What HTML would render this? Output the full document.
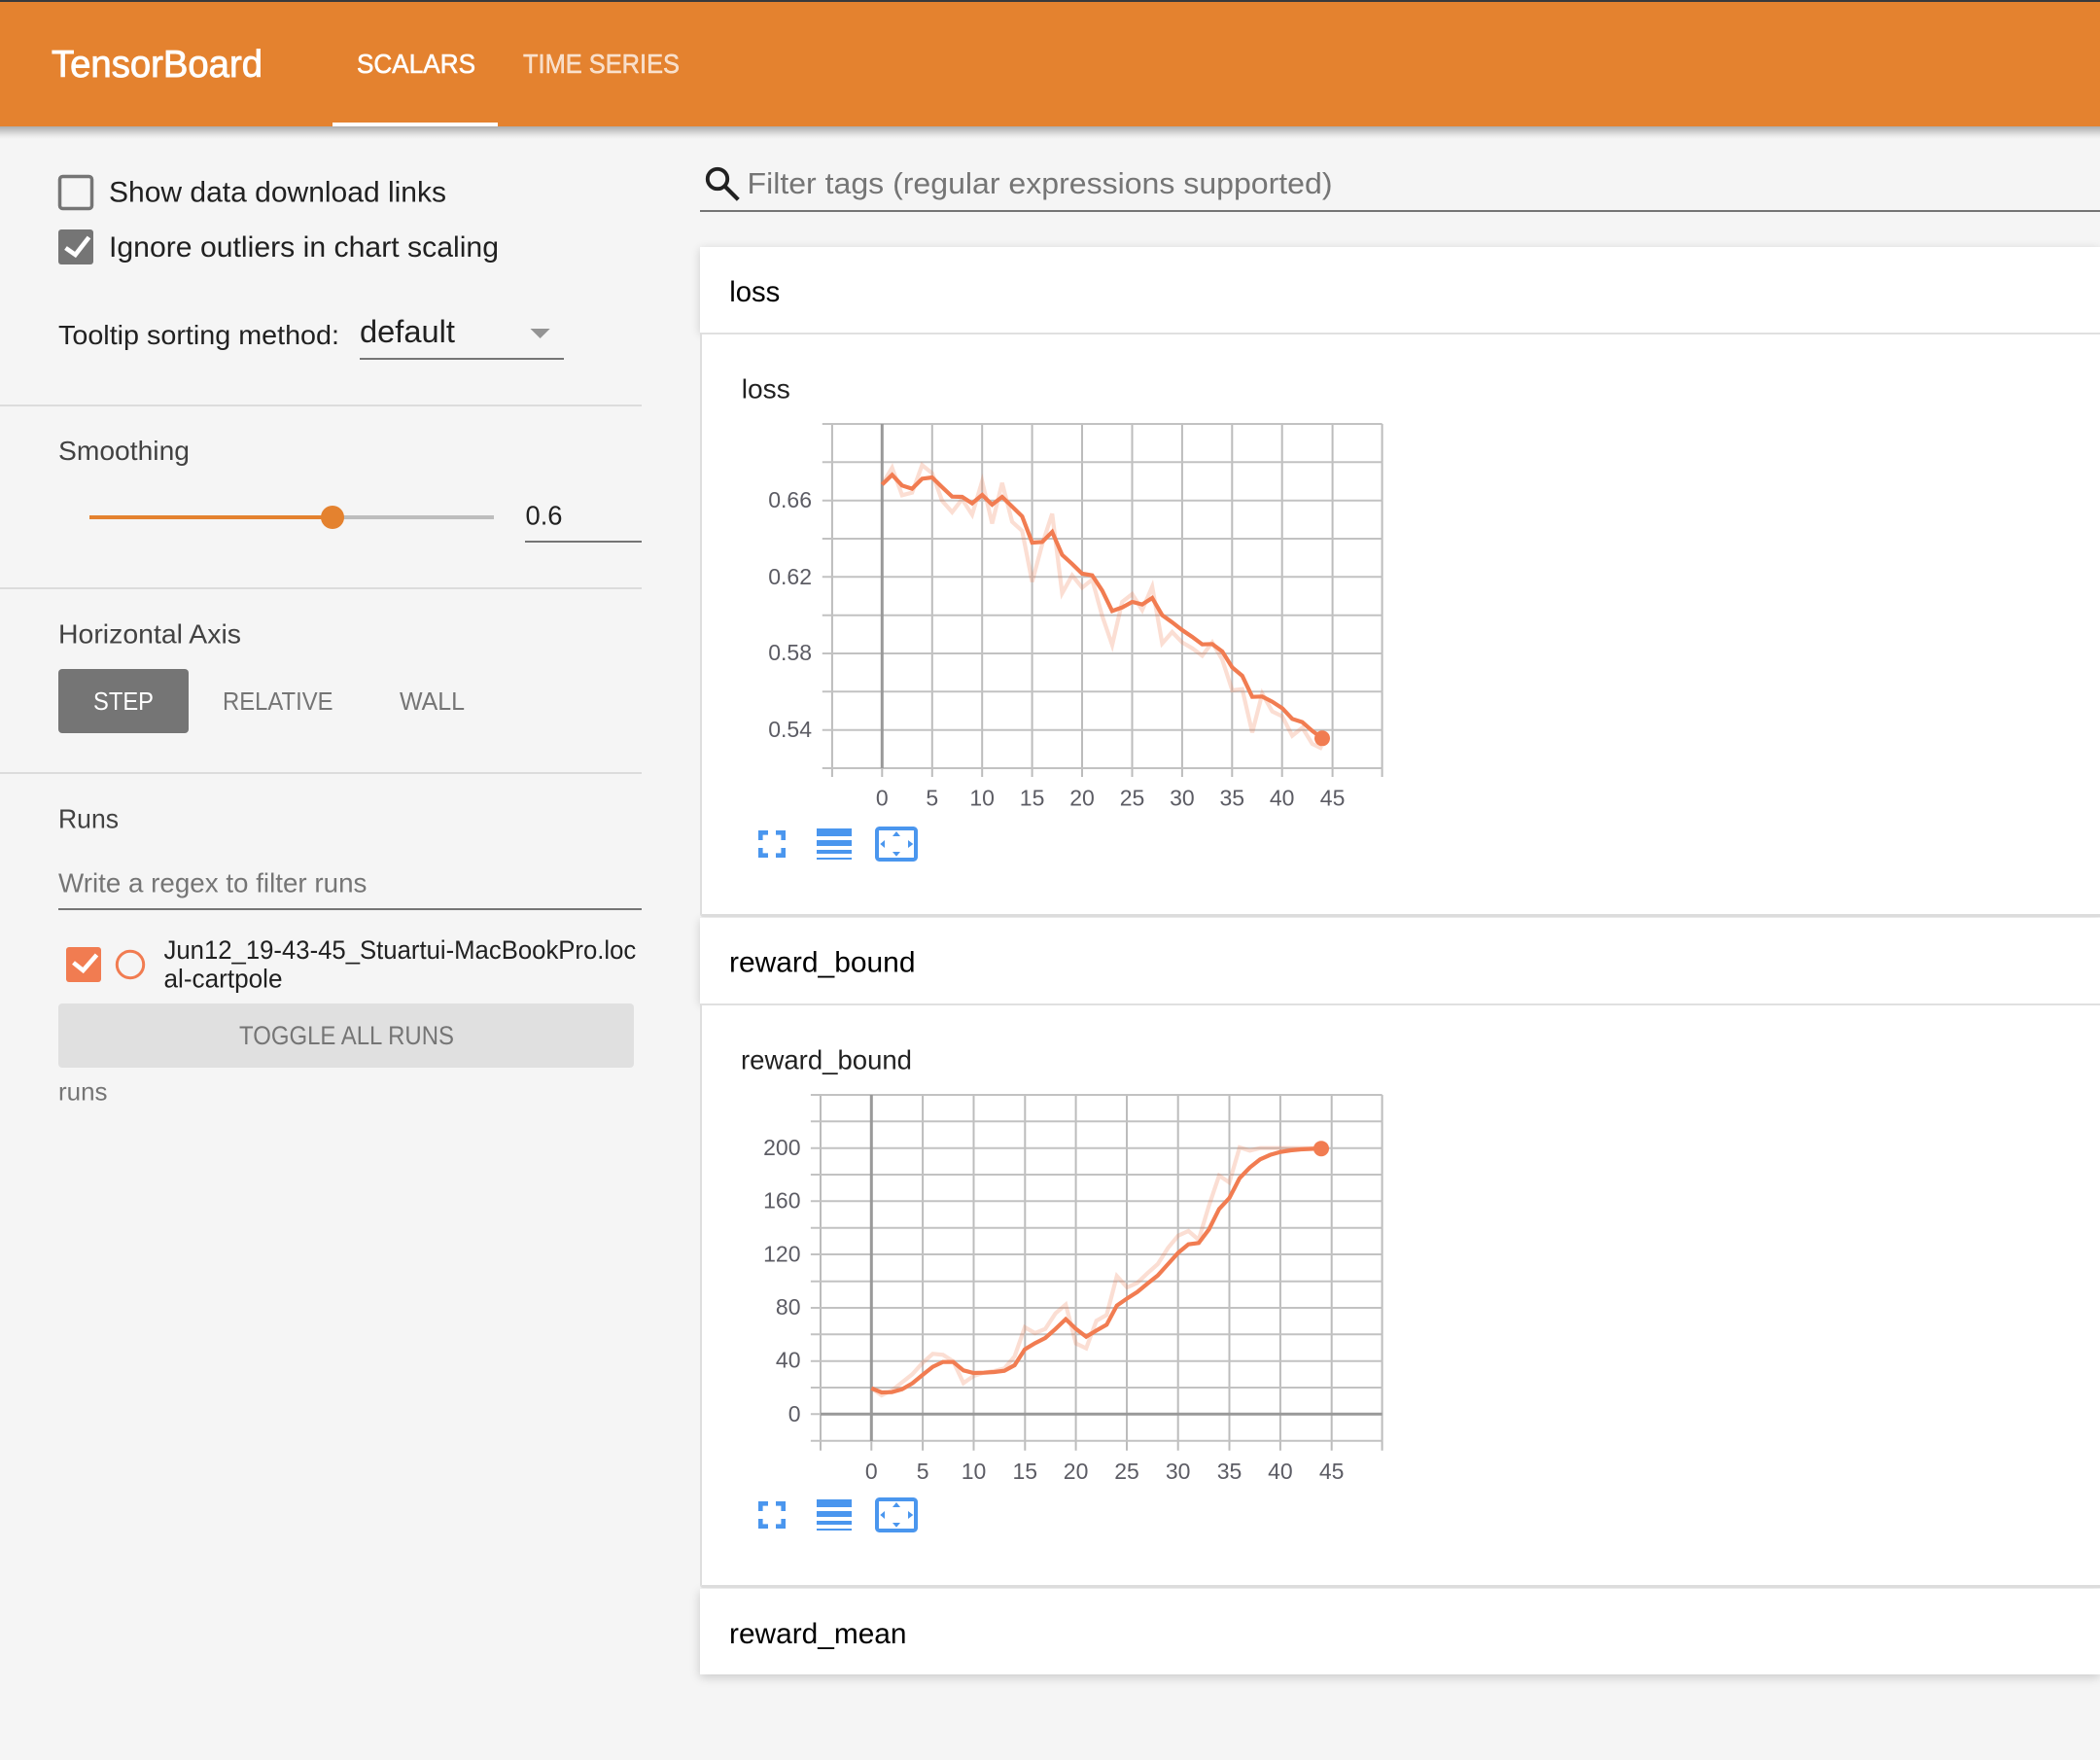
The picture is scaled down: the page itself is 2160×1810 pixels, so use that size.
<!DOCTYPE html>
<html lang="en">
<head>
<meta charset="utf-8">
<title>TensorBoard</title>
<style>
html,body{margin:0;padding:0;background:#f5f5f5;width:2160px;height:1810px;overflow:hidden}
.a{position:absolute;box-sizing:border-box}
svg{position:absolute;left:0;top:0}
text{font-family:"Liberation Sans",Arial,sans-serif;white-space:pre}
</style>
</head>
<body>
<div class="a" style="left:0;top:130px;width:2160px;height:13px;background:linear-gradient(#adadad,#c6c6c6 4px,#e6e6e6 9px,#f5f5f5)"></div>
<div class="a" style="left:0;top:0;width:2160px;height:130px;background:#e4822f;border-top:2px solid #37393d"></div>
<div class="a" style="left:720px;top:254px;width:1440px;height:88px;background:#fff;box-shadow:0 2px 9px rgba(0,0,0,.16)"></div>
<div class="a" style="left:720px;top:944px;width:1440px;height:88px;background:#fff;box-shadow:0 2px 9px rgba(0,0,0,.16)"></div>
<div class="a" style="left:720px;top:1634px;width:1440px;height:88px;background:#fff;box-shadow:0 3px 10px rgba(0,0,0,.18)"></div>
<div class="a" style="left:720px;top:342px;width:1440px;height:601px;background:#fff;border-left:2.5px solid #dedede;border-top:2px solid #e0e0e0;border-bottom:3px solid #dcdcdc;border-radius:0 0 0 3px"></div>
<div class="a" style="left:720px;top:944px;width:1440px;height:88px;background:#fff"></div>
<div class="a" style="left:720px;top:1032px;width:1440px;height:601px;background:#fff;border-left:2.5px solid #dedede;border-top:2px solid #e0e0e0;border-bottom:3px solid #dcdcdc;border-radius:0 0 0 3px"></div>
<div class="a" style="left:720px;top:1634px;width:1440px;height:88px;background:#fff"></div>

<svg width="2160" height="1810" viewBox="0 0 2160 1810" xmlns="http://www.w3.org/2000/svg">
<!-- header -->
<rect x="342" y="126" width="170" height="4" fill="#fff"/>
<text x="53" y="79" font-size="39" fill="#fff" stroke="#fff" stroke-width=".9" textLength="217" lengthAdjust="spacingAndGlyphs">TensorBoard</text>
<text x="367" y="75" font-size="28" fill="#fff" stroke="#fff" stroke-width=".6" textLength="122" lengthAdjust="spacingAndGlyphs">SCALARS</text>
<text x="538" y="75" font-size="28" fill="#fff" fill-opacity=".72" stroke="#fff" stroke-opacity=".72" stroke-width=".5" textLength="161" lengthAdjust="spacingAndGlyphs">TIME SERIES</text>

<!-- sidebar -->
<rect x="61.5" y="181.5" width="33" height="33" rx="3" fill="none" stroke="#757575" stroke-width="3.5"/>
<text x="112" y="207.7" font-size="30" fill="#212121" textLength="347" lengthAdjust="spacingAndGlyphs">Show data download links</text>
<rect x="60" y="236" width="36" height="36" rx="3" fill="#757575"/>
<path d="M67.5 255l10 7 14-18" fill="none" stroke="#fff" stroke-width="4.6"/>
<text x="112" y="264" font-size="30" fill="#212121" textLength="401" lengthAdjust="spacingAndGlyphs">Ignore outliers in chart scaling</text>
<text x="60" y="354" font-size="28" fill="#212121" textLength="289" lengthAdjust="spacingAndGlyphs">Tooltip sorting method:</text>
<text x="370" y="352.2" font-size="32" fill="#212121" textLength="98" lengthAdjust="spacingAndGlyphs">default</text>
<polygon points="545.5,338 565.7,338 555.6,348" fill="#949494"/>
<rect x="370" y="368" width="210" height="2" fill="#757575"/>
<rect x="0" y="416" width="660" height="2" fill="#dcdcdc"/>

<text x="60" y="473" font-size="28" fill="#424242" textLength="135" lengthAdjust="spacingAndGlyphs">Smoothing</text>
<rect x="342" y="530" width="166" height="4" fill="#bdbdbd"/>
<rect x="92" y="530" width="250" height="4" fill="#e4822f"/>
<circle cx="342" cy="532" r="12" fill="#e4822f"/>
<text x="540.5" y="539.5" font-size="28" fill="#212121" textLength="38" lengthAdjust="spacingAndGlyphs">0.6</text>
<rect x="540" y="556" width="120" height="2" fill="#757575"/>
<rect x="0" y="604" width="660" height="2" fill="#dcdcdc"/>

<text x="60" y="661.7" font-size="28" fill="#424242" textLength="188" lengthAdjust="spacingAndGlyphs">Horizontal Axis</text>
<rect x="60" y="688" width="134" height="66" rx="4" fill="#757575"/>
<text x="96" y="730" font-size="26" fill="#fff" textLength="62" lengthAdjust="spacingAndGlyphs">STEP</text>
<text x="229" y="730" font-size="26" fill="#757575" textLength="113.5" lengthAdjust="spacingAndGlyphs">RELATIVE</text>
<text x="411" y="730" font-size="26" fill="#757575" textLength="67" lengthAdjust="spacingAndGlyphs">WALL</text>
<rect x="0" y="794" width="660" height="2" fill="#dcdcdc"/>

<text x="60" y="851.7" font-size="28" fill="#424242" textLength="62" lengthAdjust="spacingAndGlyphs">Runs</text>
<text x="60" y="917.5" font-size="28" fill="#757575" textLength="317.4" lengthAdjust="spacingAndGlyphs">Write a regex to filter runs</text>
<rect x="60" y="934" width="600" height="2" fill="#757575"/>
<rect x="68" y="974" width="36" height="36" rx="3" fill="#f17c51"/>
<path d="M75.5 990l10 8 14-16" fill="none" stroke="#fff" stroke-width="4.6"/>
<circle cx="134" cy="992" r="13.7" fill="none" stroke="#f17c51" stroke-width="3"/>
<text x="168.5" y="986" font-size="27" fill="#212121" textLength="485.8" lengthAdjust="spacingAndGlyphs">Jun12_19-43-45_Stuartui-MacBookPro.loc</text>
<text x="168.5" y="1015.7" font-size="27" fill="#212121" textLength="122" lengthAdjust="spacingAndGlyphs">al-cartpole</text>
<rect x="60" y="1032" width="592" height="66" rx="4" fill="#e0e0e0"/>
<text x="246" y="1074" font-size="27" fill="#757575" textLength="221" lengthAdjust="spacingAndGlyphs">TOGGLE ALL RUNS</text>
<text x="60" y="1131.7" font-size="26" fill="#757575" textLength="50.5" lengthAdjust="spacingAndGlyphs">runs</text>

<!-- filter -->
<circle cx="738" cy="184" r="10.2" fill="none" stroke="#212121" stroke-width="3.9"/>
<path d="M746 192l13.3 13.3" fill="none" stroke="#212121" stroke-width="4.2"/>
<text x="768.5" y="199" font-size="31" fill="#757575" textLength="602" lengthAdjust="spacingAndGlyphs">Filter tags (regular expressions supported)</text>
<rect x="720" y="216" width="1440" height="2" fill="#757575"/>

<!-- section titles -->
<text x="750.2" y="310" font-size="30" fill="#000" textLength="52.1" lengthAdjust="spacingAndGlyphs">loss</text>
<text x="762.8" y="409.3" font-size="28" fill="#212121" textLength="50" lengthAdjust="spacingAndGlyphs">loss</text>
<text x="750" y="999.7" font-size="30" fill="#000" textLength="191.5" lengthAdjust="spacingAndGlyphs">reward_bound</text>
<text x="762" y="1099.3" font-size="28" fill="#212121" textLength="176" lengthAdjust="spacingAndGlyphs">reward_bound</text>
<text x="750" y="1690" font-size="30" fill="#000" textLength="182.5" lengthAdjust="spacingAndGlyphs">reward_mean</text>

<!-- chart 1 -->
<path d="M855.9 436V799M958.8 436V799M1010.2 436V799M1061.6 436V799M1113 436V799M1164.5 436V799M1215.9 436V799M1267.3 436V799M1318.7 436V799M1370.6 436V799M1421.6 436V799M907.3 790V799" fill="none" stroke="#bcbcbc" stroke-width="2"/>
<path d="M845.8 436H1421.6M845.8 475.3H1421.6M845.8 514.7H1421.6M845.8 554H1421.6M845.8 593.3H1421.6M845.8 632.7H1421.6M845.8 672H1421.6M845.8 711.3H1421.6M845.8 750.7H1421.6M845.8 790H1421.6" fill="none" stroke="#c2c2c2" stroke-width="2"/>
<path d="M907.3 436V790" fill="none" stroke="#999" stroke-width="3"/>
<g transform="translate(907.3,420) scale(10.29,.33333)" fill="none" stroke="#f17c51" stroke-linejoin="miter">
<polyline vector-effect="non-scaling-stroke" stroke-opacity=".25" stroke-width="4.2" points="0,235 1,183 2,268 3,260 4,175 5,200 6,285 7,320 8,280 9,328 10,225 11,355 12,230 13,350 14,378 15,535 16,420 17,325 18,570 19,515 20,553 21,528 22,640 23,730 24,597 25,573 26,622 27,550 28,725 29,690 30,722 31,740 32,763 33,722 34,775 35,870 36,866 37,1000 38,880 39,935 40,950 41,1010 42,985 43,1035 44,1050"/>
<polyline vector-effect="non-scaling-stroke" stroke-width="4.2" points="0,235 1,205 2,238 3,248 4,217 5,213 6,243 7,272 8,273 9,293 10,267 11,297 12,273 13,303 14,333 15,414 16,412 17,381 18,452 19,480 20,510 21,515 22,562 23,625 24,614 25,597 26,605 27,585 28,638 29,660 30,684 31,705 32,728 33,727 34,750 35,799 36,825 37,890 38,889 39,905 40,925 41,958 42,968 43,995 44,1018"/>
</g>
<circle cx="1360" cy="759.3" r="8" fill="#f17c51"/>
<g font-size="23" fill="#5c5c64" text-anchor="end">
<text x="835" y="522">0.66</text>
<text x="835" y="600.8">0.62</text>
<text x="835" y="679.2">0.58</text>
<text x="835" y="758">0.54</text>
</g>
<g font-size="23" fill="#5c5c64" text-anchor="middle">
<text x="907.3" y="828.3">0</text><text x="958.8" y="828.3">5</text><text x="1010.2" y="828.3">10</text><text x="1061.6" y="828.3">15</text><text x="1113" y="828.3">20</text><text x="1164.5" y="828.3">25</text><text x="1215.9" y="828.3">30</text><text x="1267.3" y="828.3">35</text><text x="1318.7" y="828.3">40</text><text x="1370.6" y="828.3">45</text>
</g>

<!-- chart 2 -->
<path d="M844 1126V1491.7M949.1 1126V1491.7M1001.5 1126V1491.7M1054.3 1126V1491.7M1106.6 1126V1491.7M1159 1126V1491.7M1211.7 1126V1491.7M1264.5 1126V1491.7M1316.9 1126V1491.7M1369.7 1126V1491.7M1421.6 1126V1491.7M896.3 1482V1491.7" fill="none" stroke="#bcbcbc" stroke-width="2"/>
<path d="M833.9 1126H1421.6M833.9 1153.3H1421.6M833.9 1180.7H1421.6M833.9 1208H1421.6M833.9 1235.3H1421.6M833.9 1262.7H1421.6M833.9 1290H1421.6M833.9 1317.7H1421.6M833.9 1345H1421.6M833.9 1372.3H1421.6M833.9 1399.7H1421.6M833.9 1427H1421.6M833.9 1454.3H844M833.9 1481.7H1421.6" fill="none" stroke="#c2c2c2" stroke-width="2"/>
<path d="M896.3 1126V1482M844 1454.3H1421.6" fill="none" stroke="#999" stroke-width="3"/>
<g transform="translate(896.3,1100) scale(10.52,.33333)" fill="none" stroke="#f17c51">
<polyline vector-effect="non-scaling-stroke" stroke-opacity=".25" stroke-width="4.2" points="0,983 1,1005 2,990 3,965 4,940 5,905 6,877 7,880 8,900 9,967 10,945 11,935 12,930 13,922 14,885 15,795 16,813 17,800 18,752 19,725 20,845 21,860 22,775 23,757 24,637 25,672 26,658 27,628 28,600 29,550 30,512 31,498 32,525 33,420 34,327 35,348 36,240 37,250 38,242 39,242 40,242 41,242 42,242 43,242 44,242"/>
<polyline vector-effect="non-scaling-stroke" stroke-width="4.2" points="0,983 1,996 2,995 3,986 4,968 5,942 6,917 7,902 8,902 9,928 10,936 11,935 12,933 13,929 14,912 15,863 16,844 17,828 18,800 19,770 20,800 21,824 22,805 23,787 24,728 25,706 26,686 27,660 28,635 29,600 30,565 31,539 32,535 33,493 34,430 35,396 36,335 37,302 38,277 39,263 40,254 41,249 42,246 43,244.5 44,243"/>
</g>
<circle cx="1359" cy="1181.2" r="8" fill="#f17c51"/>
<g font-size="23" fill="#5c5c64" text-anchor="end">
<text x="823.5" y="1187.8">200</text>
<text x="823.5" y="1242.5">160</text>
<text x="823.5" y="1297.5">120</text>
<text x="823.5" y="1351.8">80</text>
<text x="823.5" y="1406.6">40</text>
<text x="823.5" y="1461.8">0</text>
</g>
<g font-size="23" fill="#5c5c64" text-anchor="middle">
<text x="896.3" y="1521">0</text><text x="949.1" y="1521">5</text><text x="1001.5" y="1521">10</text><text x="1054.3" y="1521">15</text><text x="1106.6" y="1521">20</text><text x="1159" y="1521">25</text><text x="1211.7" y="1521">30</text><text x="1264.5" y="1521">35</text><text x="1316.9" y="1521">40</text><text x="1369.7" y="1521">45</text>
</g>

<!-- chart toolbars -->
<g fill="#4a96ee">
<path d="M780 854h10v4.6h-5.4v5.4H780zM798 854h10v10h-4.6v-5.4H798zM780 872h4.6v5.4H790V882h-10zM803.4 872H808v10h-10v-4.6h5.4z"/>
<path d="M840 852h36v8h-36zM840 864h36v6h-36zM840 874h36v4h-36zM840 882h36v2h-36z"/>
<rect x="902" y="852" width="40" height="32" rx="2.5" fill="none" stroke="#4a96ee" stroke-width="4"/>
<path d="M922 855l4 5h-8zM922 880.7l-4-4.7h8zM905.3 868l4.7-4v8zM939.3 868l-5.3-4v8z"/>
</g>
<g fill="#4a96ee" transform="translate(0,690)">
<path d="M780 854h10v4.6h-5.4v5.4H780zM798 854h10v10h-4.6v-5.4H798zM780 872h4.6v5.4H790V882h-10zM803.4 872H808v10h-10v-4.6h5.4z"/>
<path d="M840 852h36v8h-36zM840 864h36v6h-36zM840 874h36v4h-36zM840 882h36v2h-36z"/>
<rect x="902" y="852" width="40" height="32" rx="2.5" fill="none" stroke="#4a96ee" stroke-width="4"/>
<path d="M922 855l4 5h-8zM922 880.7l-4-4.7h8zM905.3 868l4.7-4v8zM939.3 868l-5.3-4v8z"/>
</g>
</svg>
</body>
</html>
